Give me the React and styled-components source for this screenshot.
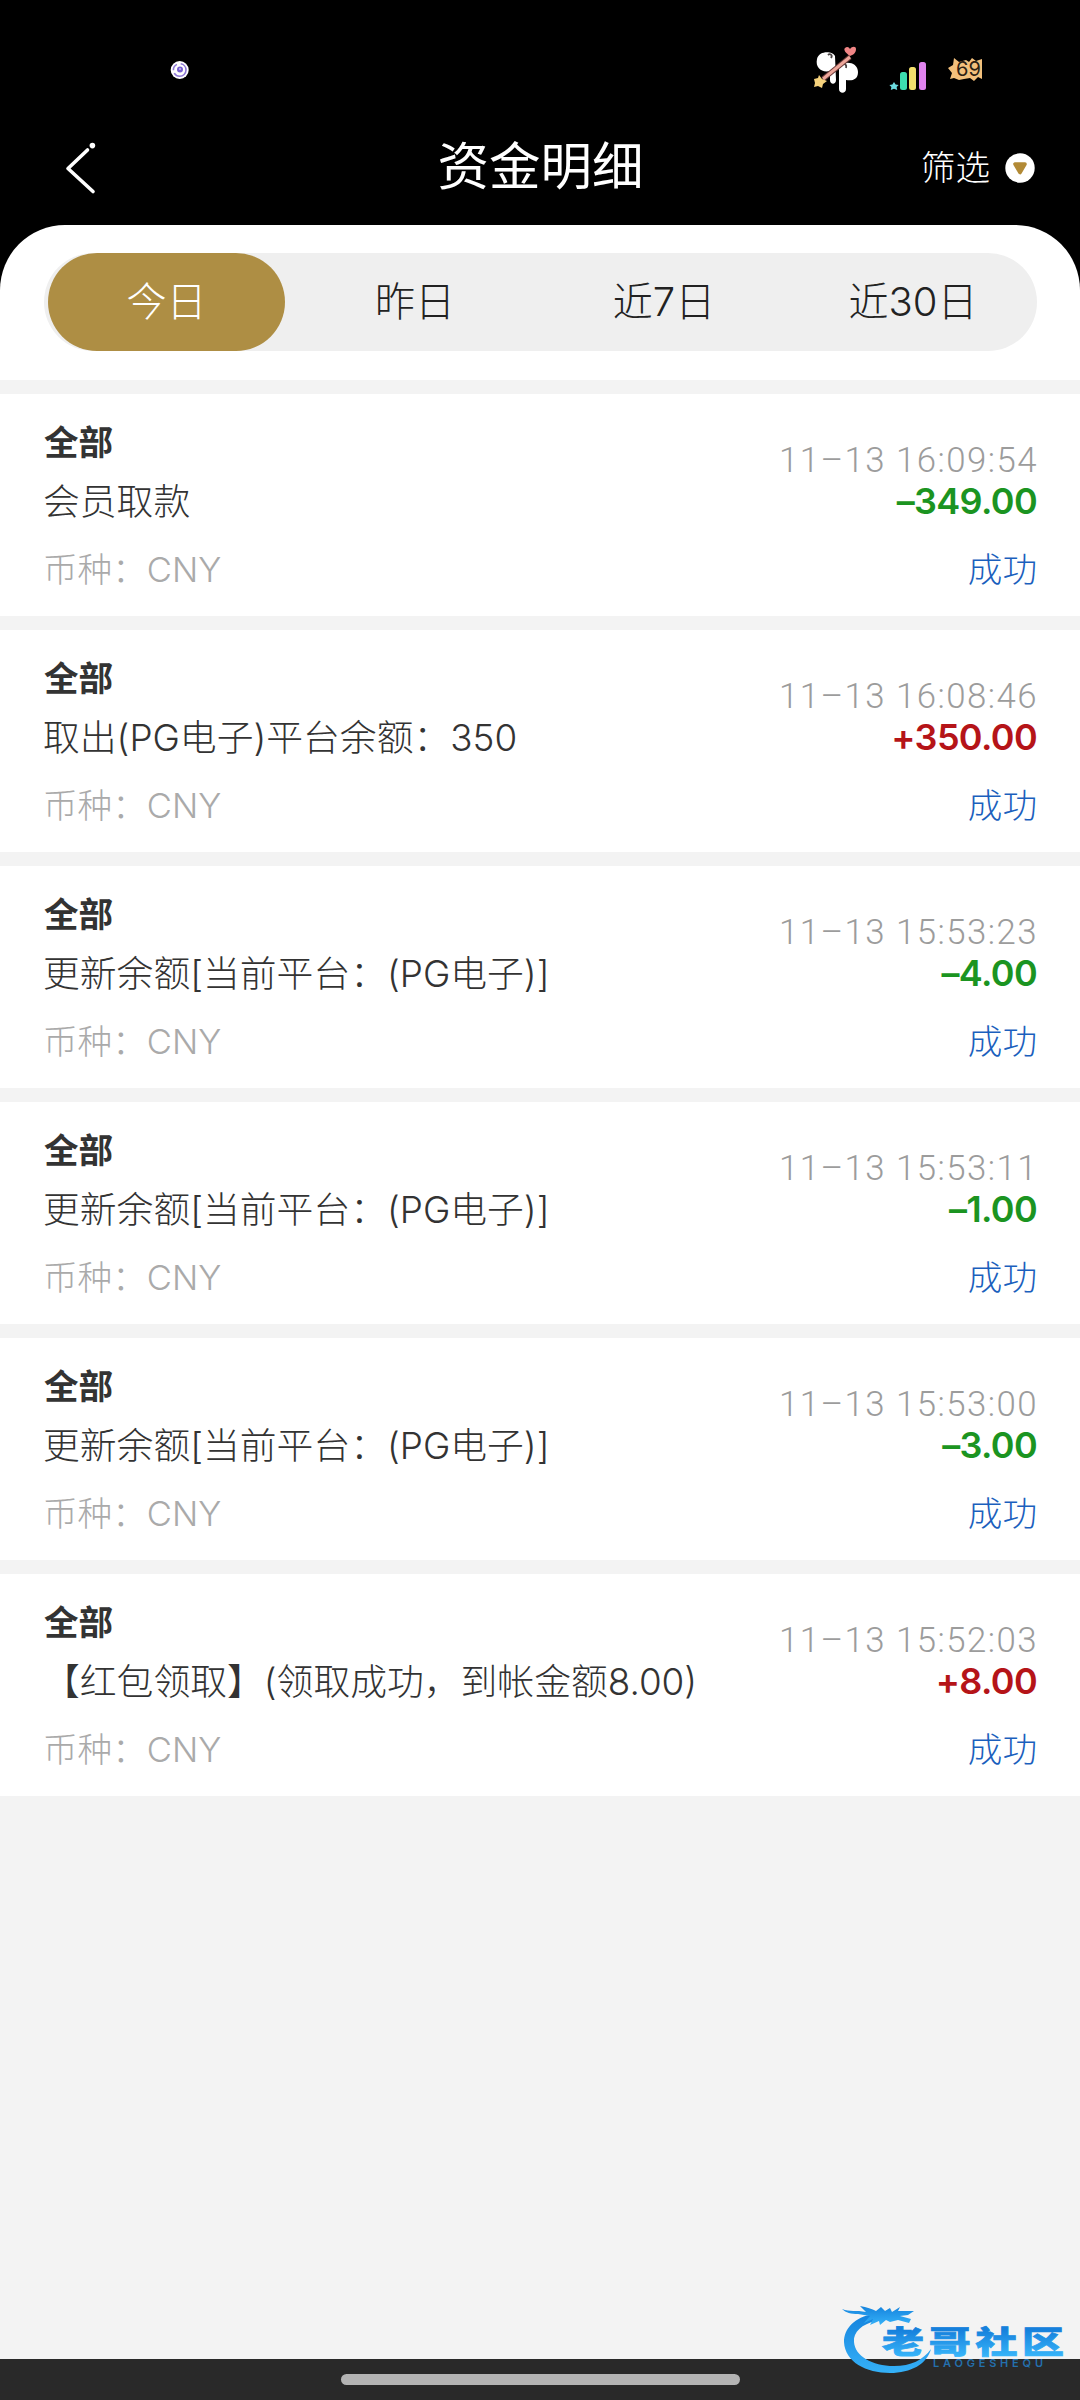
import styled, { createGlobalStyle } from "styled-components";

const GlobalStyle = createGlobalStyle`
    * {
        box-sizing: border-box;
    }

    body {
        margin: 0;
        background-color: #f3f3f3;
        font-family: Inter, "Noto Sans CJK SC", sans-serif;
        font-weight: 300;
    }
`

const Page = styled.div`
    width: 1080px;
    height: 2400px;
    display: flex;
    flex-direction: column;
    overflow: hidden;
    background-color: #f3f3f3;
`

const Top = styled.div`
    background-color: #000;
`

const StatusBar = styled.div`
    height: 110px;
    padding: 30px 97px 0 169px;
    display: flex;
    justify-content: space-between;
`

const Header = styled.div`
    height: 115px;
    padding: 0 44px 0 62px;
    display: grid;
    grid-template-columns: 1fr auto 1fr;
    align-items: center;
`

const Title = styled.h1`
    margin: 0;
    padding: 0 17px 4px 0;
    color: #fff;
    font-size: 51.5px;
    font-weight: 400;
    line-height: 60px;
`

const Filter = styled.div`
    display: flex;
    align-items: center;
    justify-content: flex-end;
    gap: 14px;
    color: #fff;
    font-size: 34.6px;
`

const FilterText = styled.span`
    padding-bottom: 5px;
`

const TabPanel = styled.div`
    height: 155px;
    padding: 28px 43px 0 44px;
    border-radius: 65px 65px 0 0;
    background-color: #fff;
`

const Tabs = styled.div`
    height: 98px;
    padding: 0 5px 0 4px;
    display: grid;
    grid-template-columns: 237px 1fr 1fr 1fr;
    column-gap: 11px;
    border-radius: 49px;
    background-color: #efefef;
`

const Tab = styled.div`
    display: flex;
    align-items: center;
    justify-content: center;
    padding-bottom: 6px;
    border-radius: 49px;
    font-size: 40px;
    color: ${({ $active }) => ($active ? "#fff" : "#222")};
    background-color: ${({ $active }) => ($active ? "#ae8e44" : "transparent")};
`

const List = styled.div`
    flex: 1;
    padding-top: 14px;
    display: flex;
    flex-direction: column;
    gap: 14px;
`

const Row = styled.div`
    height: 222px;
    padding: 0 43px;
    display: flex;
    justify-content: space-between;
    background-color: #fff;
    white-space: nowrap;
`

const Left = styled.div`
    padding-top: 22px;
`

const Right = styled.div`
    padding-top: 44px;
    text-align: right;
`

const Category = styled.div`
    padding-left: 1px;
    color: #333;
    font-size: 34.6px;
    font-weight: 700;
    line-height: 52px;
`

const Desc = styled.div`
    padding-top: 1px;
    color: #333;
    font-size: 36.8px;
    line-height: 66px;
`

const Currency = styled.div`
    color: #aaa;
    font-size: 34.6px;
    line-height: 69px;
`

const Time = styled.div`
    margin-right: -1px;
    color: #9c9c9c;
    font-family: Roboto, sans-serif;
    font-size: 34.8px;
    letter-spacing: 1.45px;
    line-height: 44px;
`

const Amount = styled.div`
    color: ${({ $income }) => ($income ? "#b51418" : "#1b9421")};
    font-size: 36px;
    font-weight: 600;
    letter-spacing: -0.65px;
    line-height: 38px;
`

const Status = styled.div`
    margin-top: 15px;
    color: #1b5fbd;
    font-size: 34.6px;
    line-height: 69px;
`

const NavBar = styled.div`
    position: relative;
    height: 41px;
    padding-top: 15px;
    display: flex;
    justify-content: center;
    background-color: #292929;
`

const Handle = styled.div`
    width: 399px;
    height: 11px;
    border-radius: 6px;
    background-color: #b4b4b4;
`

const Watermark = styled.svg`
    position: absolute;
    right: 0;
    bottom: 0;
`

const tabs = ["今日", "昨日", "近7日", "近30日"]

const records = [
    { desc: "会员取款", time: "11–13 16:09:54", amount: "–349.00" },
    { desc: "取出(PG电子)平台余额：350", time: "11–13 16:08:46", amount: "+350.00" },
    { desc: "更新余额[当前平台：(PG电子)]", time: "11–13 15:53:23", amount: "–4.00" },
    { desc: "更新余额[当前平台：(PG电子)]", time: "11–13 15:53:11", amount: "–1.00" },
    { desc: "更新余额[当前平台：(PG电子)]", time: "11–13 15:53:00", amount: "–3.00" },
    { desc: "【红包领取】(领取成功，到帐金额8.00)", time: "11–13 15:52:03", amount: "+8.00" },
]

function NoticeIcon() {
    return (
        <svg width="22" height="80" viewBox="0 0 22 80">
            <circle cx="10.7" cy="40" r="9" fill="#fff" />
            <circle cx="10.7" cy="40" r="6.3" fill="none" stroke="#8f78d6" strokeWidth="1.6" strokeDasharray="16 3 7 4" />
            <circle cx="11" cy="39.5" r="3" fill="#7860cf" />
            <circle cx="11" cy="39" r="1" fill="#c9bdf2" />
        </svg>
    )
}

function StatusIcons() {
    return (
        <svg width="203" height="80" viewBox="780 30 203 80">
            {/* wings and wand */}
            <path d="M835 56c-2-5-16-6-18 3c-2 9 5 14 13 12v9c0 5 6 5 6 0z" fill="#fff" />
            <path d="M839 66c6-6 19-4 19 6c0 8-6 9-12 8v9c0 5-7 5-7 0z" fill="#fff" />
            <path d="M828 55c2-2 5 0 3 3M842 64c3-1 5 1 4 4" fill="none" stroke="#4a4444" strokeWidth="1.8" />
            <path d="M823 79L850 57" stroke="#6b3a38" strokeWidth="5" />
            <path d="M823 79L850 57" stroke="#eda69a" strokeWidth="3" />
            <path d="M850 56c-4-3-7-6-5-8c2-2 4-1 5 1c2-3 6-3 6 0c0 4-3 6-6 7z" fill="#f08585" />
            <path d="M819 75l3 4l5 2l-4 3l-1 4l-4-2l-4 1l1-4l-1-4l4-1z" fill="#f6d27c" />
            {/* signal */}
            <path d="M894 82l1.6 2.6l3 .3l-2 2.2l.6 3l-3.2-1.4l-3.2 1.4l.6-3l-2-2.2l3-.3z" fill="#6cdce0" />
            <rect x="900" y="72" width="7" height="18" rx="2.5" fill="#3ddfae" />
            <rect x="909" y="67" width="7" height="23" rx="2.5" fill="#f2e06c" />
            <rect x="919" y="62" width="7" height="28" rx="2.5" fill="#e083ee" />
            {/* battery level */}
            <path d="M954 58l5 4l7-2l3 2l3-4l4 3l6-2v20l-4-2l-4 4l-4-3l-6 1l-5 1l-5-2l-4 1l2-6l-4-5l5-3z" fill="#f3c07c" />
            <text x="956" y="76" fontSize="20" fontWeight="400" fill="#2c2013" textLength="25">69</text>
        </svg>
    )
}

function BackIcon() {
    return (
        <svg width="36" height="54" viewBox="0 0 36 54" fill="none" stroke="#fff" strokeLinecap="round" strokeLinejoin="round">
            <path d="M25.5 9L6 27.5L31 50.5" strokeWidth="3.6" />
            <circle cx="30.4" cy="4.6" r="2.8" fill="#fff" stroke="none" />
        </svg>
    )
}

function FilterIcon() {
    return (
        <svg width="32" height="32" viewBox="0 0 32 32">
            <circle cx="16" cy="16" r="14.7" fill="#fff" />
            <path d="M11 12H21L16 20.5z" fill="#b28a36" stroke="#b28a36" strokeWidth="3.6" strokeLinejoin="round" />
        </svg>
    )
}

function Logo() {
    return (
        <Watermark width="260" height="120" viewBox="0 0 260 120">
            <defs>
                <linearGradient id="ring" x1="0" y1="0" x2="0" y2="1">
                    <stop offset="0" stopColor="#1583dd" />
                    <stop offset="1" stopColor="#35b1f8" />
                </linearGradient>
                <linearGradient id="word" x1="0" y1="0" x2="0" y2="1">
                    <stop offset="0.3" stopColor="#1680dc" />
                    <stop offset="0.9" stopColor="#38b6fa" />
                </linearGradient>
            </defs>
            {/* dragon */}
            <path d="M54 34C34 37 24 49 24 62C25 82 46 93 70 93C91 93 107 84 111 69C103 80 91 86 74 86C52 86 35 76 34 62C33 52 42 44 56 41z" fill="url(#ring)" />
            <path d="M22 29C30 32 36 30 46 32L40 26C47 27 52 29 56 31L61 27L65 31L70 28L72 32L80 27L78 31L94 31L88 35L80 36L91 39L89 43L78 40L70 42L66 40L60 45L59 41L50 45L53 39L44 43L50 36L38 34C31 34 26 33 22 29z" fill="url(#ring)" />
            <g transform="translate(62 72.5) scale(1 .74)">
                <text x="0" y="0" fontFamily="Noto Sans CJK SC" fontSize="42" fontWeight="900" letterSpacing="4.7" fill="url(#word)" stroke="url(#word)" strokeWidth="1">老哥社区</text>
            </g>
            <text x="113" y="87" fontSize="11" fontWeight="600" fill="#2470ad" textLength="110">LAOGESHEQU</text>
        </Watermark>
    )
}

function Record({ item }) {
    return (
        <Row>
            <Left>
                <Category>全部</Category>
                <Desc>{item.desc}</Desc>
                <Currency>币种：CNY</Currency>
            </Left>
            <Right>
                <Time>{item.time}</Time>
                <Amount $income={item.amount[0] === "+"}>{item.amount}</Amount>
                <Status>成功</Status>
            </Right>
        </Row>
    )
}

export default function App() {
    return (
        <Page>
            <GlobalStyle />
            <Top>
                <StatusBar>
                    <NoticeIcon />
                    <StatusIcons />
                </StatusBar>
                <Header>
                    <BackIcon />
                    <Title>资金明细</Title>
                    <Filter>
                        <FilterText>筛选</FilterText>
                        <FilterIcon />
                    </Filter>
                </Header>
                <TabPanel>
                    <Tabs>
                        {tabs.map((tab, i) => (
                            <Tab key={tab} $active={i === 0}>{tab}</Tab>
                        ))}
                    </Tabs>
                </TabPanel>
            </Top>
            <List>
                {records.map((item) => (
                    <Record key={item.time} item={item} />
                ))}
            </List>
            <NavBar>
                <Handle />
                <Logo />
            </NavBar>
        </Page>
    )
}
